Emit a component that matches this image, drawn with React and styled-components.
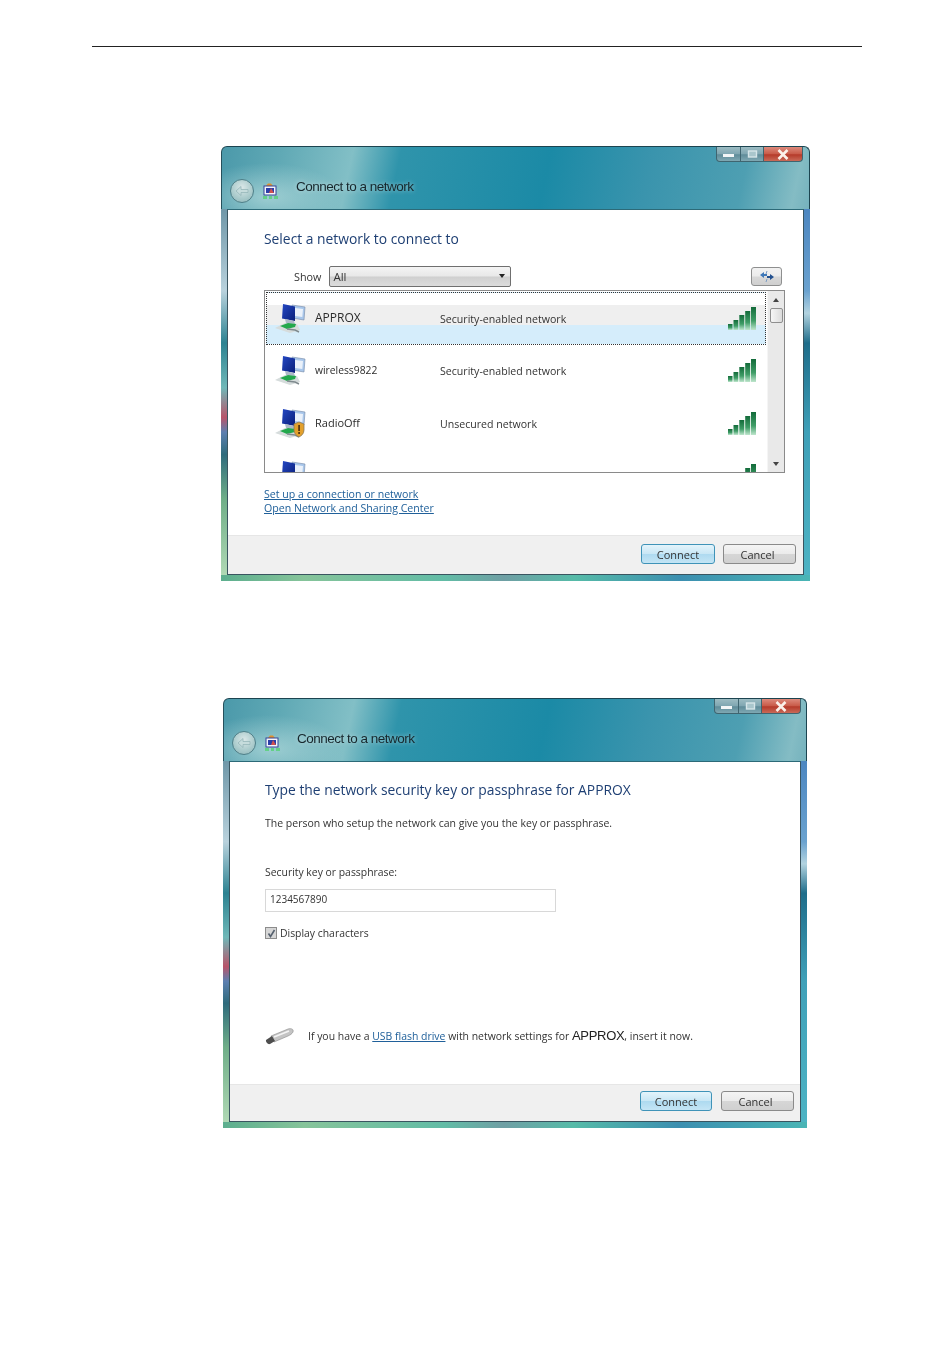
import React from 'react';
import styled, { createGlobalStyle } from 'styled-components';

const GlobalStyle = createGlobalStyle`
  html, body { margin: 0; padding: 0; background: #fff; }
  body { font-family: 'Open Sans', 'Liberation Sans', sans-serif; color: #333; }
`;

const Page = styled.div`
  width: 950px;
  min-height: 1370px;
  padding-top: 46px;
  box-sizing: border-box;
  overflow: hidden;
`;

const Rule = styled.div`
  height: 1px;
  margin: 0 88px 0 92px;
  background: #222;
`;

const Win = styled.div`
  width: ${p => p.$w}px;
  margin-left: ${p => p.$x}px;
  margin-top: ${p => p.$top}px;
  filter: blur(0.3px);
`;

const TitleBar = styled.div`
  height: 63px;
  box-sizing: border-box;
  border-top: 1px solid #1c4450;
  border-left: 1px solid #26505c;
  border-right: 1px solid #1c4450;
  border-radius: 6px 6px 0 0;
  background:
    radial-gradient(ellipse 75px 34px at 45px 50px, rgba(190, 225, 225, 0.65), transparent),
    linear-gradient(102deg, #4b99aa 0, #60a9b5 10%, #82bfc6 22%, #2f94ab 30%, #1b8aa6 55%, #3a94ad 72%, #4e9fb2 88%, #84bcc4 97%, #75b2bd 100%);
`;

const Controls = styled.div`
  display: flex;
  justify-content: flex-end;
  padding-right: ${p => p.$right}px;
`;

const CtlBtn = styled.div`
  width: ${p => p.$w}px;
  height: 15px;
  display: flex;
  align-items: center;
  justify-content: center;
  box-sizing: border-box;
  border: 1px solid #3f6570;
  border-top: 0;
  margin-left: -1px;
  background: ${p => p.$red
    ? 'linear-gradient(#dd8a7c, #c85a48 50%, #b53a2a 55%, #c96a58)'
    : 'linear-gradient(#9cbcc3, #7fa6b1 50%, #5f8c99 55%, #7fa8b3)'};
  border-radius: ${p => p.$radius || '0'};
`;

const TitleRow = styled.div`
  display: flex;
  align-items: center;
  height: 28px;
  margin-top: 15px;
  padding-left: 8px;
`;

const BackBtn = styled.div`
  width: 24px;
  height: 24px;
  flex: none;
  box-sizing: border-box;
  border: 1px solid #4f7f88;
  border-radius: 50%;
  background: radial-gradient(circle at 50% 35%, #dbe8e8, #a9cacb 60%, #8cb5b8);
  display: flex;
  align-items: center;
  justify-content: center;
`;

const TitleIcon = styled.svg`
  width: 15px;
  height: 16px;
  margin-left: 9px;
  flex: none;
`;

const TitleText = styled.div`
  margin-left: ${p => p.$gap}px;
  padding-bottom: 10px;
  font-family: 'Liberation Sans', sans-serif;
  font-size: 13.5px;
  letter-spacing: -0.5px;
  color: #17272c;
  text-shadow: 0 0 5px rgba(255, 255, 255, 0.55);
`;

const Frame = styled.div`
  padding: 0 6px 6px;
  background:
    linear-gradient(90deg, #5cae8e 0, #86c49a 14%, #62bca6 38%, #6f9fa4 48%, #56bba8 60%, #3c8fb0 78%, #4ab5b5 100%) left bottom / 100% 6px no-repeat,
    linear-gradient(180deg, #6f97a8 0, #b9d2dd 22%, #2c8291 36%, #6fb8b8 48%, #b8546a 56%, #5c7fb0 60%, #2f6b7c 66%, #6fae88 78%, #b5dcb8 100%) left top / 6px 100% no-repeat,
    linear-gradient(180deg, #4c86c0 0, #6aa2cf 22%, #b2d3e0 28%, #1f6d8a 36%, #3fa0b8 60%, #4db4c4 100%) right top / 6px 100% no-repeat;
`;

const Client = styled.div`
  height: ${p => p.$h}px;
  box-sizing: border-box;
  display: flex;
  flex-direction: column;
  background: #fff;
  border: 1px solid #3a5560;
  border-top-color: #2c6a78;
`;

const Body = styled.div`
  flex: 1;
  padding: ${p => p.$top}px 0 0 ${p => p.$left}px;
`;

const Heading = styled.div`
  font-size: 13.85px;
  line-height: 20px;
  color: #1e3f73;
  white-space: nowrap;
`;

const ShowRow = styled.div`
  display: flex;
  align-items: center;
  justify-content: space-between;
  width: 518px;
  height: 21px;
  margin-top: 17px;
  padding-left: 30px;
  box-sizing: border-box;
`;

const ShowGroup = styled.div`
  display: flex;
  align-items: center;
  gap: 8px;
  font-size: 10.8px;
`;

const Dropdown = styled.div`
  width: 182px;
  height: 21px;
  box-sizing: border-box;
  display: flex;
  align-items: center;
  justify-content: space-between;
  padding: 0 5px 1px 3px;
  border: 1px solid #6f6f6f;
  border-radius: 2px;
  font-size: 11.5px;
  background: linear-gradient(#f4f4f4, #e8e8e8 48%, #cfcfcf 52%, #dcdcdc);
`;

const Caret = styled.span`
  width: 0;
  height: 0;
  border-left: 3.5px solid transparent;
  border-right: 3.5px solid transparent;
  border-${p => (p.$up ? 'bottom' : 'top')}: 4px solid ${p => p.$color || '#222'};
`;

const RefreshBtn = styled.div`
  width: 31px;
  height: 19px;
  box-sizing: border-box;
  display: flex;
  align-items: center;
  justify-content: center;
  border: 1px solid #8e8f8f;
  border-radius: 3px;
  background: linear-gradient(#f2f2f2, #ebebeb 48%, #d8d8d8 52%, #cfcfcf);
`;

const ListBox = styled.div`
  display: flex;
  width: 521px;
  height: 183px;
  margin-top: 3px;
  box-sizing: border-box;
  border: 1px solid #8a8a8a;
  overflow: hidden;
`;

const Rows = styled.div`
  flex: 1;
  padding: 1px;
  min-width: 0;
`;

const Row = styled.div`
  height: 52.5px;
  box-sizing: border-box;
  display: flex;
  align-items: center;
  padding: 0 10px 0 9px;
  font-size: 10.6px;
  ${p => p.$selected && `
    border: 1px dotted #333;
    padding: 0 9px 0 8px;
    background: linear-gradient(#fff 0 24%, #efefef 24% 62%, #d5edfb 62%);
  `}
`;

const NetName = styled.div`
  width: 125px;
  margin-left: 9px;
  padding-bottom: 2px;
  font-size: ${p => p.$size}px;
  color: #2c2c2c;
`;

const NetStatus = styled.div`
  flex: 1;
  padding-top: 1px;
  color: #333;
`;

const NetIcon = styled.svg`
  width: 31px;
  height: 29px;
  flex: none;
`;

const SignalIcon = styled.svg`
  width: 28px;
  height: 23px;
  flex: none;
`;

const Scrollbar = styled.div`
  width: 17px;
  flex: none;
  box-sizing: border-box;
  display: flex;
  flex-direction: column;
  align-items: center;
  background: #e9e9e9;
  border-left: 1px solid #f5f5f5;
`;

const ScrollEnd = styled.div`
  height: 17px;
  flex: none;
  display: flex;
  align-items: center;
  justify-content: center;
`;

const Thumb = styled.div`
  width: 13px;
  height: 15px;
  box-sizing: border-box;
  border: 1px solid #8f8f8f;
  border-radius: 2px;
  background: linear-gradient(90deg, #f6f6f6, #dcdcdc);
`;

const Gap = styled.div`
  flex: 1;
`;

const Links = styled.div`
  margin-top: 14px;
`;

const NavLink = styled.a`
  display: block;
  font-size: 10.6px;
  line-height: 14px;
  color: #20609a;
  text-decoration: underline;
`;

const Footer = styled.div`
  height: ${p => p.$h}px;
  flex: none;
  box-sizing: border-box;
  display: flex;
  justify-content: flex-end;
  gap: ${p => p.$gap}px;
  padding: ${p => p.$pad}px ${p => p.$right}px 0 0;
  background: #f0f0f0;
  border-top: 1px solid #e6e6e6;
`;

const DlgBtn = styled.div`
  width: ${p => p.$w}px;
  height: 20px;
  box-sizing: border-box;
  display: flex;
  align-items: center;
  justify-content: center;
  padding-right: ${p => (p.$primary ? 0 : 4)}px;
  font-size: 11px;
  color: #333;
  border-radius: 3px;
  border: 1px solid ${p => (p.$primary ? '#3f93b8' : '#8a8a8a')};
  background: ${p => p.$primary
    ? 'linear-gradient(#e4f4fb, #c9e7f5 48%, #aedaf0 52%, #c4e5f5)'
    : 'linear-gradient(#f4f4f4, #ebebeb 48%, #d6d6d6 52%, #d0d0d0)'};
`;

const Para = styled.div`
  margin-top: ${p => p.$top}px;
  font-size: ${p => p.$size}px;
  line-height: 14px;
  white-space: nowrap;
`;

const KeyInput = styled.div`
  width: 291px;
  height: 23px;
  margin-top: 10px;
  box-sizing: border-box;
  display: flex;
  align-items: center;
  padding: 0 0 3px 4px;
  border: 1px solid #d8d8d8;
  font-size: 10px;
`;

const CheckRow = styled.div`
  display: flex;
  align-items: center;
  height: 14px;
  gap: 3px;
  margin-top: 14px;
  font-size: 10.4px;
`;

const CheckBox = styled.div`
  width: 12px;
  height: 12px;
  box-sizing: border-box;
  border: 1px solid #8c8c8c;
  background: #d6d6d6;
  display: flex;
  align-items: center;
  justify-content: center;
`;

const UsbRow = styled.div`
  display: flex;
  align-items: center;
  height: 20px;
  margin-top: 86px;
  font-size: 10.45px;
  white-space: nowrap;
`;

const UsbIcon = styled.svg`
  width: 29px;
  height: 17px;
  flex: none;
  margin-right: 14px;
`;

const UsbText = styled.span`
  padding-bottom: 2px;
`;

const InlineLink = styled.a`
  color: #20609a;
  text-decoration: underline;
`;

const BigName = styled.span`
  font-family: 'Liberation Sans', sans-serif;
  font-size: 13px;
  letter-spacing: -0.3px;
  color: #222;
`;

const NetworkGlyph = ({ warn, id }) => (
  <NetIcon viewBox="0 0 31 29">
    <defs>
      <linearGradient id={id} x1="0" y1="0" x2="1" y2="1">
        <stop offset="0" stopColor="#2448c4" />
        <stop offset="1" stopColor="#0a1f7a" />
      </linearGradient>
    </defs>
    <path d="M0 24l10-5 12 1 3 6-10 3z" fill="#d6dcdc" />
    <path d="M17 1l13 2-1 13-12-2z" fill="#a8c6ea" stroke="#7488a6" strokeWidth="0.6" />
    <path d="M20 4l8 1-.7 8-7.3-1z" fill="#eaf1fa" />
    <path d="M8 0l12 2.5V17L7 14.5z" fill={`url(#${id})`} />
    <path d="M10 15l9 2 1 3-9-1z" fill="#aeb9c8" />
    <path d="M5 22l8-3 8 1-1 3-8 2z" fill="#23a84c" />
    <path d="M12 25l8 1 4 2" stroke="#7f8a8e" strokeWidth="1.4" fill="none" />
    {warn && (
      <>
        <path d="M19 15l5-2 5 2v6c0 4-3 6-5 7-2-1-5-3-5-7z" fill="#e3a02c" stroke="#8a7a5a" strokeWidth="0.8" />
        <rect x="23.2" y="16" width="1.8" height="6" fill="#5b3a10" />
        <rect x="23.2" y="23" width="1.8" height="2" fill="#5b3a10" />
      </>
    )}
  </NetIcon>
);

const Signal = ({ id }) => (
  <SignalIcon viewBox="0 0 28 23">
    <defs>
      <linearGradient id={id} x1="0" y1="0" x2="0" y2="1">
        <stop offset="0" stopColor="#136b3a" />
        <stop offset="0.6" stopColor="#3f9d67" />
        <stop offset="1" stopColor="#bfe6cd" />
      </linearGradient>
    </defs>
    <rect x="0" y="17" width="4.5" height="6" fill={`url(#${id})`} />
    <rect x="5.5" y="13" width="4.8" height="10" fill={`url(#${id})`} />
    <rect x="11.3" y="8" width="5" height="15" fill={`url(#${id})`} />
    <rect x="17.2" y="4" width="5" height="19" fill={`url(#${id})`} />
    <rect x="23" y="0" width="5" height="23" fill={`url(#${id})`} />
  </SignalIcon>
);

const WindowControls = ({ right }) => (
  <Controls $right={right}>
    <CtlBtn $w={25} $radius="0 0 0 4px">
      <svg width="11" height="8" viewBox="0 0 11 8"><rect x="0" y="4" width="11" height="3" fill="#f2f6f7" /></svg>
    </CtlBtn>
    <CtlBtn $w={24}>
      <svg width="11" height="9" viewBox="0 0 11 9"><rect x="1.5" y="1" width="8" height="6" fill="#a9c6cc" stroke="#d6e6e9" strokeWidth="1.4" /></svg>
    </CtlBtn>
    <CtlBtn $w={40} $red $radius="0 0 4px 0">
      <svg width="14" height="11" viewBox="0 0 14 11"><path d="M2.5 1l9 9M11.5 1l-9 9" stroke="#fbf1ea" strokeWidth="2.6" /></svg>
    </CtlBtn>
  </Controls>
);

const WindowHead = ({ right, titleGap }) => (
  <TitleBar>
    <WindowControls right={right} />
    <TitleRow>
      <BackBtn>
        <svg width="14" height="12" viewBox="0 0 14 12">
          <path d="M1 6l5-4.5v3h7v3H6v3z" fill="#c6dcdc" stroke="#8fb2b5" strokeWidth="0.7" />
        </svg>
      </BackBtn>
      <TitleIcon viewBox="0 0 15 16">
        <path d="M2 4l3-3.5h3L10 3z" fill="#e0902c" />
        <rect x="1" y="3" width="12" height="9" fill="#f4f5fb" stroke="#35459a" />
        <rect x="3" y="5" width="8" height="5" fill="#2b3fa8" />
        <path d="M8 5l3 5H6z" fill="#d05050" />
        <rect x="0" y="13" width="4" height="3" fill="#63d088" />
        <rect x="6" y="13" width="3" height="3" fill="#63d088" />
        <rect x="11" y="13" width="4" height="3" fill="#63d088" />
      </TitleIcon>
      <TitleText $gap={titleGap}>Connect to a network</TitleText>
    </TitleRow>
  </TitleBar>
);

const networks = [
  { name: 'APPROX', size: 12, status: 'Security-enabled network', selected: true },
  { name: 'wireless9822', size: 10.3, status: 'Security-enabled network' },
  { name: 'RadioOff', size: 11, status: 'Unsecured network', warn: true },
  { name: '', size: 11, status: '' },
];

export default function App() {
  return (
    <Page>
      <GlobalStyle />
      <Rule />

      <Win $x={221} $w={589} $top={99}>
        <WindowHead right={6} titleGap={18} />
        <Frame>
          <Client $h={366}>
            <Body $top={19} $left={36}>
              <Heading>Select a network to connect to</Heading>
              <ShowRow>
                <ShowGroup>
                  Show
                  <Dropdown>All<Caret /></Dropdown>
                </ShowGroup>
                <RefreshBtn>
                  <svg width="16" height="13" viewBox="0 0 16 13">
                    <path d="M1 5l4-3v2h3v2H5v2z" fill="#3f78b8" />
                    <path d="M15 7l-4-3v2H8v2h3v2z" fill="#23508f" />
                    <path d="M8 1L7 4M8 9l-1 3" stroke="#7a9cc4" strokeWidth="1" />
                  </svg>
                </RefreshBtn>
              </ShowRow>
              <ListBox>
                <Rows>
                  {networks.map((n, i) => (
                    <Row key={i} $selected={n.selected}>
                      <NetworkGlyph warn={n.warn} id={`net${i}`} />
                      <NetName $size={n.size}>{n.name}</NetName>
                      <NetStatus>{n.status}</NetStatus>
                      <Signal id={`sig${i}`} />
                    </Row>
                  ))}
                </Rows>
                <Scrollbar>
                  <ScrollEnd><Caret $up $color="#444" /></ScrollEnd>
                  <Thumb />
                  <Gap />
                  <ScrollEnd><Caret $color="#444" /></ScrollEnd>
                </Scrollbar>
              </ListBox>
              <Links>
                <NavLink>Set up a connection or network</NavLink>
                <NavLink>Open Network and Sharing Center</NavLink>
              </Links>
            </Body>
            <Footer $h={39} $gap={8} $pad={8} $right={7}>
              <DlgBtn $w={74} $primary>Connect</DlgBtn>
              <DlgBtn $w={73}>Cancel</DlgBtn>
            </Footer>
          </Client>
        </Frame>
      </Win>

      <Win $x={223} $w={584} $top={117}>
        <WindowHead right={5} titleGap={17} />
        <Frame>
          <Client $h={361}>
            <Body $top={18} $left={35}>
              <Heading>Type the network security key or passphrase for APPROX</Heading>
              <Para $top={16} $size={10.5}>The person who setup the network can give you the key or passphrase.</Para>
              <Para $top={35} $size={10.4}>Security key or passphrase:</Para>
              <KeyInput>1234567890</KeyInput>
              <CheckRow>
                <CheckBox>
                  <svg width="9" height="9" viewBox="0 0 9 9"><path d="M1.5 4.5l2 3 4-6.5" fill="none" stroke="#55606e" strokeWidth="1.6" /></svg>
                </CheckBox>
                Display characters
              </CheckRow>
              <UsbRow>
                <UsbIcon viewBox="0 0 29 17">
                  <path d="M6 8L23 1c3-1 6 0 5 3-1 2-3 3-5 4L9 14z" fill="#c4c4c4" stroke="#8a8a8a" strokeWidth="0.6" />
                  <path d="M1 12l6-4 3 5-5 3c-2 .8-4.5-2-4-4z" fill="#4e4e4e" />
                  <path d="M9 9l15-6" stroke="#f4f4f4" strokeWidth="1.6" />
                </UsbIcon>
                <UsbText>
                  If you have a <InlineLink>USB flash drive</InlineLink> with network settings for <BigName>APPROX</BigName>, insert it now.
                </UsbText>
              </UsbRow>
            </Body>
            <Footer $h={37} $gap={9} $pad={6} $right={6}>
              <DlgBtn $w={72} $primary>Connect</DlgBtn>
              <DlgBtn $w={73}>Cancel</DlgBtn>
            </Footer>
          </Client>
        </Frame>
      </Win>
    </Page>
  );
}
